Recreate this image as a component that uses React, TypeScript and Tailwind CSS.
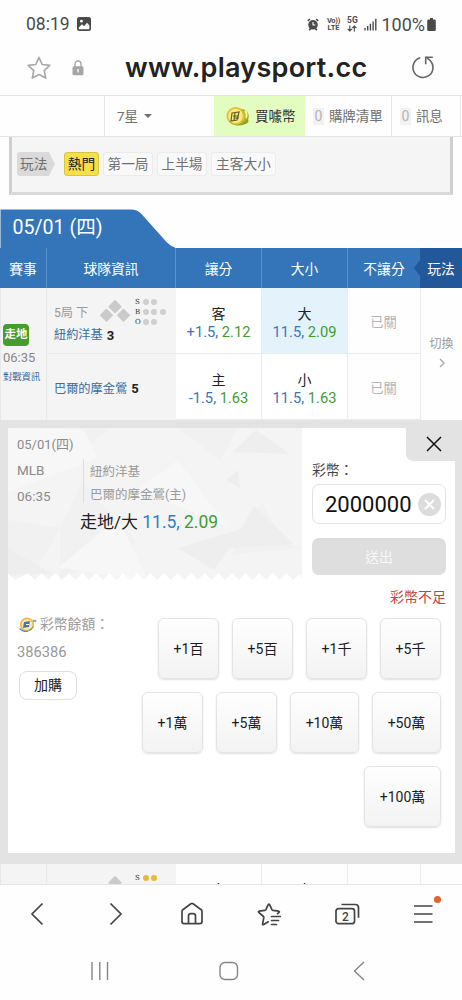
import React from "react"

const plays = [
  { label: "第一局", className: "w-[50px]" },
  { label: "上半場", className: "ml-1 w-[50px]" },
  { label: "主客大小", className: "ml-1 w-[65px]" },
]

const amounts = [
  [
    { label: "+1百", width: "w-[61px]" },
    { label: "+5百", width: "w-[61px]" },
    { label: "+1千", width: "w-[61px]" },
    { label: "+5千", width: "w-[61px]" },
  ],
  [
    { label: "+1萬", width: "w-[61px]" },
    { label: "+5萬", width: "w-[61px]" },
    { label: "+10萬", width: "w-[69px]" },
    { label: "+50萬", width: "w-[69px]" },
  ],
  [{ label: "+100萬", width: "w-[77px]" }],
]

const StatusBar = () => (
  <div className="flex h-12 shrink-0 items-center pl-[26px] pr-[26px] text-[#4a4a4a]">
    <span className="text-[17.5px]">08:19</span>
    <svg className="ml-[7px] h-[14px] w-[14px]" viewBox="0 0 14 14">
      <rect x="0" y="0" width="14" height="14" rx="2.5" fill="#4a4a4a" />
      <path d="M1.8 10.5 5 7.3l2 1.9 3-3.4 2.4 2.7v3a.8.8 0 0 1-.8.8H2.6a.8.8 0 0 1-.8-.8z" fill="#fff" />
      <circle cx="4.4" cy="4.2" r="1.4" fill="#fff" />
    </svg>
    <div className="ml-auto flex items-center">
      <svg className="h-[13px] w-[12px]" viewBox="0 0 12 13">
        <path d="M.8 2.8 2.9 1M11.2 2.8 9.1 1M2.2 12.2l1.4-1.6M9.8 12.2l-1.4-1.6" stroke="#4a4a4a" strokeWidth="1.6" />
        <circle cx="6" cy="6.8" r="4.8" fill="#4a4a4a" />
        <path d="M6 4v3h2.4" fill="none" stroke="#fff" strokeWidth="1.1" />
      </svg>
      <div className="ml-[7px] w-[14px] text-center text-[7.5px] font-bold leading-[7px]">
        <div className="tracking-[-0.3px]">Vo))</div>
        <div>LTE</div>
      </div>
      <div className="ml-[6px] flex w-[12px] flex-col items-center text-[8.5px] font-bold leading-[7px]">
        <div>5G</div>
        <svg className="mt-px h-[7px] w-[10px]" viewBox="0 0 10 7">
          <path d="M2.8.5v5.3M.7 3.8l2.1 2.2 2.1-2.2M7.3 6.5V1.2M5.2 3.2l2.1-2.2 2.1 2.2" fill="none" stroke="#4a4a4a" strokeWidth="1.1" />
        </svg>
      </div>
      <svg className="ml-[6px] h-[13px] w-[13px]" viewBox="0 0 13 13">
        <path d="M1 10v2.5M3.7 8v4.5M6.4 5.8v6.7M9.1 3.4v9.1M11.8.8v11.7" stroke="#4a4a4a" strokeWidth="1.4" />
      </svg>
      <span className="ml-[4px] text-[18px]">100%</span>
      <svg className="ml-[2px] h-[13px] w-[9px]" viewBox="0 0 9 13">
        <path d="M3 0h3v1.4h1.4A1.4 1.4 0 0 1 8.8 2.8v8.7A1.4 1.4 0 0 1 7.4 13H1.6A1.4 1.4 0 0 1 .2 11.5V2.8A1.4 1.4 0 0 1 1.6 1.4H3z" fill="#4a4a4a" />
      </svg>
    </div>
  </div>
)

const AddressBar = () => (
  <div className="flex h-[47px] shrink-0 items-center pl-[26px] pr-[27px]">
    <svg className="mt-[-8px] h-6 w-[26px]" viewBox="0 0 26 24">
      <path
        d="m13 1.5 3.2 7 7.6.9-5.6 5.2 1.5 7.5L13 18.4l-6.7 3.7 1.5-7.5L2.2 9.4l7.6-.9z"
        fill="none"
        stroke="#a9a9a9"
        strokeWidth="1.7"
        strokeLinejoin="round"
      />
    </svg>
    <svg className="mt-[-8px] ml-5 h-4 w-3" viewBox="0 0 12 16">
      <path d="M3 7V4a3 3 0 0 1 6 0v3" fill="none" stroke="#a6a6a6" strokeWidth="1.3" />
      <rect x=".5" y="6.3" width="11" height="9" rx="1.5" fill="#a6a6a6" />
      <path d="M6 9v3.6" stroke="#fff" strokeWidth="1.3" />
    </svg>
    <div className="mt-[-6px] ml-[41px] w-[244px] whitespace-nowrap font-['Inter','Noto_Sans',sans-serif] text-[27px] font-semibold tracking-[0.25px] text-[#222]">
      www.playsport.cc
    </div>
    <svg className="mt-[-9px] ml-auto h-[24px] w-[24px]" viewBox="0 0 24 24">
      <path d="M9.3 2.8A10 10 0 1 0 19.6 6L15.2 2.2" fill="none" stroke="#666" strokeWidth="1.6" />
      <path d="M14.7 9.3V2.2h7.1" fill="none" stroke="#666" strokeWidth="1.6" />
    </svg>
  </div>
)

const Coin = ({ className }: { className: string }) => (
  <svg className={className} viewBox="0 0 26 20">
    <ellipse cx="15.5" cy="11" rx="9.5" ry="8" fill="#a9b82c" transform="rotate(-15 15 11)" />
    <circle cx="11.5" cy="10" r="9" fill="#e3bd2d" />
    <circle cx="11.5" cy="10" r="7.3" fill="#fae982" />
    <path d="M4 14C9 21 19 20 24 12l.5 4C20 20 9 22 4 14z" fill="#8aa325" />
    <path d="m8 7 7-1-2 8-6 1zM9 10h6M10 12h5M11 7l-1 7" fill="none" stroke="#61621a" strokeWidth="1.2" />
    <path d="M21 5c2 2 2 4 1 7" fill="none" stroke="#fff7a8" strokeWidth="1.8" />
  </svg>
)

const SiteTabs = () => (
  <div className="flex h-[42px] shrink-0 border-y border-[#e4e4e4] text-[13.5px] text-[#707070]">
    <div className="w-[105px] border-r border-[#e8e8e8]" />
    <div className="flex w-[109px] items-center pl-[12px]">
      7星
      <span className="ml-[6px] border-x-[4px] border-t-[4px] border-x-transparent border-t-[#707070]" />
    </div>
    <div className="flex w-[91px] items-center bg-[#e3fcc0] pl-[10px] text-[#333]">
      <Coin className="h-5 w-[26px]" />
      <span className="ml-[5px]">買噱幣</span>
    </div>
    <div className="flex w-[87px] items-center border-r border-[#e8e8e8] pl-[8px]">
      <span className="mr-[5px] bg-[#f2f2f3] px-[1.5px] text-[14px] leading-[17px] text-[#b5b5b5]">0</span>
      購牌清單
    </div>
    <div className="flex w-[69px] items-center border-r border-[#e8e8e8] pl-[8px]">
      <span className="mr-[5px] bg-[#f2f2f3] px-[1.5px] text-[14px] leading-[17px] text-[#b5b5b5]">0</span>
      訊息
    </div>
  </div>
)

const PlayFilter = () => (
  <div className="mx-[9px] h-[58px] shrink-0 border-x-[3px] border-b-[3px] border-x-[#cfcfcf] border-b-[#dadada] bg-[#f5f5f5] pt-[15px]">
    <div className="flex h-[24px] pl-[5px] text-[13.7px] text-[#707070]">
      <div className="flex w-[38px] items-center rounded-l-[3px] bg-[#dadada] pl-[3px] [clip-path:polygon(0_0,84%_0,100%_50%,84%_100%,0_100%)]">
        玩法
      </div>
      <div className="mx-[9px] mr-1 flex w-[35px] items-center justify-center rounded-[3px] border border-[#d9c545] bg-[#f7df48] text-[#222]">
        熱門
      </div>
      {plays.map((x) => (
        <div
          key={x.label}
          className={`flex items-center justify-center rounded-[3px] border border-[#ececec] bg-[#f9f9f9] ${x.className}`}
        >
          {x.label}
        </div>
      ))}
    </div>
  </div>
)

const Count = ({ rows }: { rows: { label: string; dots: number; color: string }[] }) => (
  <div className="flex flex-col">
    {rows.map((x) => (
      <div key={x.label} className="flex h-[10px] items-center">
        <span className="w-[6px] font-['DejaVu_Serif',serif] text-[7px] text-[#333]">{x.label}</span>
        {Array.from({ length: x.dots }).map((_, i) => (
          <span key={i} className={`ml-[2.2px] h-[6px] w-[6px] rounded-full ${x.color}`} />
        ))}
      </div>
    ))}
  </div>
)

const Bases = () => (
  <svg className="h-[24px] w-[30px] shrink-0" viewBox="0 0 30 24">
    <g fill="#cacaca" stroke="#cacaca" strokeWidth="1.6" strokeLinejoin="round">
      <path d="m15 .9 5.8 5.8-5.8 5.8-5.800-5.800z" />
      <path d="m6.500 9.600 5.700 5.700-5.700 5.700L.8 15.300z" />
      <path d="m23.500 9.600 5.700 5.700-5.700 5.700-5.700-5.700z" />
    </g>
  </svg>
)

type OddsProps = {
  name: string
  line: string
  odds: string
  active?: boolean
}

const Odds = ({ name, line, odds, active }: OddsProps) => (
  <div
    className={`flex h-[66px] flex-col items-center justify-center border-b border-r border-[#ebebeb] pt-[4px] ${
      active ? "bg-[#e4f2fc]" : "bg-white"
    }`}
  >
    <div className="text-[14px] leading-[18px] text-[#222]">{name}</div>
    <div className="whitespace-nowrap text-[14.7px] leading-[18px] text-[#3f9c30]">
      <span className="text-[#3b76b8]">{line},</span> {odds}
    </div>
  </div>
)

const Closed = () => (
  <div className="flex h-[66px] items-center justify-center border-b border-r border-[#ebebeb] pt-[4px] pr-px text-[13.3px] text-[#b5b5b5]">
    已關
  </div>
)

const Matches = () => (
  <div className="shrink-0">
    <svg className="mt-[14px] block h-[39px] w-[180px]" viewBox="0 0 180 39">
      <path d="M.5 39V.5H131q6 0 10 4l26 29q4 4 8 5v.5z" fill="#3474b9" />
      <text x="12.5" y="25" fill="#fff" fontSize="19.6">
        05/01 (四)
      </text>
    </svg>
    <div className="flex h-10 bg-[#3474b9] text-center text-[13.8px] leading-[42px] text-white">
      <div className="w-[47px] border-r border-[#5c91c9]">賽事</div>
      <div className="w-[129px] border-r border-[#5c91c9]">球隊資訊</div>
      <div className="w-[86px] border-r border-[#5c91c9]">讓分</div>
      <div className="w-[86px] border-r border-[#5c91c9]">大小</div>
      <div className="w-[66px] pl-[6px]">不讓分</div>
      <div className="w-[48px] bg-[#22579a] pl-[6px] [clip-path:polygon(0_50%,6px_30%,6px_0,100%_0,100%_100%,6px_100%,6px_70%)]">
        玩法
      </div>
    </div>
    <div className="flex h-[132px]">
      <div className="flex w-[47px] flex-col items-start border-x border-[#e8e8e8] bg-[#f4f4f4] pl-[2px] pt-[36px]">
        <div className="flex h-[22px] w-[26px] items-center justify-center rounded-[4px] bg-[#449d2c] text-[11.5px] font-bold text-white">
          走地
        </div>
        <div className="mt-[4px] text-[13px] leading-[16px] text-[#888]">06:35</div>
        <div className="mt-[4px] whitespace-nowrap text-[9.3px] leading-[14px] text-[#376d9e]">對戰資訊</div>
      </div>
      <div className="w-[129px] bg-[#f4f4f4]">
        <div className="h-[66px] border-b border-[#e9e9e9] pl-[7px] pt-[9px]">
          <div className="flex h-[30px]">
            <span className="w-[46px] pt-[7px] text-[12.2px] text-[#999]">5局 下</span>
            <div className="pt-[3px]">
              <Bases />
            </div>
            <div className="ml-[5px]">
              <Count
                rows={[
                  { label: "S", dots: 2, color: "bg-[#cfcfcf]" },
                  { label: "B", dots: 3, color: "bg-[#cfcfcf]" },
                  { label: "O", dots: 2, color: "bg-[#cfcfcf]" },
                ]}
              />
            </div>
          </div>
          <div className="flex items-center text-[12.2px] leading-[17px] text-[#376d9e]">
            紐約洋基<b className="ml-[4px] text-[13px] text-[#222]">3</b>
          </div>
        </div>
        <div className="flex h-[66px] items-center pl-[7px] pt-[4px] text-[12.2px] text-[#376d9e]">
          巴爾的摩金鶯<b className="ml-[4px] text-[13px] text-[#222]">5</b>
        </div>
      </div>
      <div className="w-[86px]">
        <Odds name="客" line="+1.5" odds="2.12" />
        <Odds name="主" line="-1.5" odds="1.63" />
      </div>
      <div className="w-[86px]">
        <Odds name="大" line="11.5" odds="2.09" active />
        <Odds name="小" line="11.5" odds="1.63" />
      </div>
      <div className="w-[73px]">
        <Closed />
        <Closed />
      </div>
      <div className="flex w-[41px] flex-col items-center pt-[47px] text-[12px] leading-[18px] text-[#999]">
        切換
        <svg className="mt-[5px] h-[10px] w-[6px]" viewBox="0 0 6 10">
          <path d="m1 1 4 4-4 4" fill="none" stroke="#a5a5a5" strokeWidth="1.2" />
        </svg>
      </div>
    </div>
  </div>
)

const Ticket = () => (
  <div className="relative h-[152px] w-[294px]">
    <svg className="absolute inset-0 h-full w-full" viewBox="0 0 294 152">
      <defs>
        <clipPath id="ticket">
          <path d="M0 0H294V150l-2-4-6.800 6-6.800-7-6.800 7-6.800-7-6.800 7-6.800-7-6.800 7-6.800-7-6.800 7-6.800-7-6.800 7-6.800-7-6.800 7-6.800-7-6.800 7-6.800-7-6.800 7-6.800-7-6.800 7-6.800-7-6.800 7-6.800-7-6.800 7-6.800-7-6.800 7-6.800-7-6.800 7-6.800-7-6.800 7-6.800-7-6.800 7-6.800-7-6.800 7-6.800-7-6.800 7-6.800-7-6.800 7-6.800-7-6.800 7-6.800-7L7 152 0 145z" />
        </clipPath>
      </defs>
      <g clipPath="url(#ticket)">
        <path fill="#f4f4f4" d="M0 0h294v152H0z" />
        <path fill="#f1f1f1" d="M0 92l52 8-28 48H0zM52 100l22-46 55 60-77 38zM72 0h30L80 18zM170 0h60l-18 32zM294 120l-70 6 30-52 20 40z" />
        <path fill="#eeeeee" d="M225 24 248 2l34 24zM222 120l24-42 40 38zM218 52l12-10 2 18zM170 120l66-20-30 42zM0 120l44 26H0z" />
        <path fill="#f7f7f7" d="M76 2 90 30 0 64V0zM130 60l40-28 50 68zM50 140l60-50 30 62z" />
      </g>
    </svg>
    <div className="relative pl-[9px] pt-[8px] text-[13px] text-[#8b8b8b]">
      <div className="leading-[18px]">05/01(四)</div>
      <div className="mt-[3px] flex">
        <div className="w-[66px] text-[13.5px]">
          <div className="leading-[26px]">MLB</div>
          <div className="leading-[26px]">06:35</div>
        </div>
        <div className="mt-[2px] h-[44px] border-l border-[#dedede] pl-[6px] text-[12.5px] text-[#9b9b9b]">
          <div className="mt-px leading-[23px]">紐約洋基</div>
          <div className="leading-[23px]">巴爾的摩金鶯(主)</div>
        </div>
      </div>
      <div className="mt-px whitespace-nowrap pl-[63px] text-[17px] leading-[24px] text-[#222]">
        走地/大{" "}
        <span className="text-[17.5px] text-[#2f7dcb]">11.5,</span>{" "}
        <span className="text-[17.5px] text-[#3f9c30]">2.09</span>
      </div>
    </div>
  </div>
)

const BetSlip = () => (
  <div className="h-[444px] shrink-0 border-b-[11px] border-l-[8px] border-r-[7px] border-t-[8px] border-[#e3e3e3] bg-white">
    <div className="flex h-[182px]">
      <Ticket />
      <div className="w-[153px]">
        <div className="ml-auto flex h-[33px] w-[49px] items-center justify-center rounded-bl-[7px] bg-[#e3e3e3] pb-[2px] pl-[6px]">
          <svg className="h-4 w-4" viewBox="0 0 16 16">
            <path d="m1 1 14 14M15 1 1 15" stroke="#111" strokeWidth="1.5" />
          </svg>
        </div>
        <div className="pl-[10px] pr-[9px]">
          <div className="text-[13.8px] leading-[18px] text-[#444]">彩幣：</div>
          <div className="mt-[5px] flex h-10 items-center rounded-[7px] border border-[#e2e2e2] pl-[12px] text-[22px] text-[#111]">
            2000000
            <span className="ml-[6px] flex h-[23px] w-[23px] items-center justify-center rounded-full bg-[#dcdcdc]">
              <svg className="h-[11px] w-[11px]" viewBox="0 0 11 11">
                <path d="m1 1 9 9M10 1l-9 9" stroke="#fff" strokeWidth="2" />
              </svg>
            </span>
          </div>
          <div className="mt-[14px] flex h-[37px] items-center justify-center rounded-[7px] bg-[#dedede] pt-[2px] text-[13.7px] text-[#f8f8f8]">
            送出
          </div>
          <div className="mt-[12px] text-right text-[14px] leading-[20px] text-[#c9433a]">彩幣不足</div>
        </div>
      </div>
    </div>
    <div className="flex justify-between pr-[14px] pt-[8px]">
      <div className="pl-[9px] text-[13.8px] text-[#999]">
        <div className="mt-[-4px] flex h-[20px] items-center">
          <svg className="mr-[3px] ml-[2px] h-[15px] w-[18px]" viewBox="0 0 18 15">
            <circle cx="8" cy="7.5" r="7" fill="#f0b94d" />
            <circle cx="8" cy="7.5" r="5.3" fill="#ffedac" />
            <path d="M.5 11.5q7 7 14-2" fill="none" stroke="#4b91c9" strokeWidth="1.2" />
            <path d="m5 5 6-1-1 6-6 1z" fill="#4b72ac" />
            <path d="M7 7.5h3" stroke="#fff" />
            <path d="M14 4q2-.8 3 .6" fill="none" stroke="#6ca6dc" strokeWidth="2" />
          </svg>
          彩幣餘額：
        </div>
        <div className="mt-[8px] text-[14.7px] leading-[20px]">386386</div>
        <button className="mt-[9px] ml-[2px] flex h-[29px] w-[58px] items-center justify-center rounded-[8px] border border-[#dfdfdf] text-[14px] text-[#222]">
          加購
        </button>
      </div>
      <div className="flex flex-col gap-[13px]">
        {amounts.map((row, index) => (
          <div key={index} className="flex justify-end gap-[13px]">
            {row.map((x) => (
              <button
                key={x.label}
                className={`flex h-[61px] items-center justify-center rounded-[6px] border border-[#e4e4e4] bg-linear-to-b from-[#fefefe] to-[#f3f3f3] pt-[2px] text-[14px] text-[#1c1c1c] shadow-[0_1px_2px_rgba(0,0,0,0.13)] ${x.width}`}
              >
                {x.label}
              </button>
            ))}
          </div>
        ))}
      </div>
    </div>
  </div>
)

// following match, cut off by the browser toolbar
const NextMatch = () => (
  <div className="flex h-[21px] shrink-0 overflow-hidden border-b border-[#e6e6e6]">
    <div className="w-[47px] border-x border-[#e8e8e8] bg-[#f4f4f4]" />
    <div className="flex w-[129px] bg-[#f4f4f4] pl-[7px] pt-[9px]">
      <span className="w-[46px] pt-[8px] text-[12.2px] leading-[18px] text-[#999]">5局 下</span>
      <div className="pt-[3px]">
        <Bases />
      </div>
      <div className="ml-[5px]">
        <Count rows={[{ label: "S", dots: 2, color: "bg-[#e8b73d]" }]} />
      </div>
    </div>
    <div className="w-[86px] border-r border-[#ebebeb] pt-[17px] text-center text-[14px] leading-[18px]">客</div>
    <div className="w-[86px] border-r border-[#ebebeb] pt-[17px] text-center text-[14px] leading-[18px]">大</div>
    <div className="w-[73px] border-r border-[#ebebeb]" />
  </div>
)

const BrowserNav = () => (
  <div className="flex h-[57px] shrink-0 items-center justify-between pl-[30px] pr-[20px]">
    <svg className="h-[24px] w-[14px]" viewBox="0 0 14 24">
      <path d="M12.5 1.5 2 12l10.5 10.5" fill="none" stroke="#444" strokeWidth="1.7" />
    </svg>
    <svg className="ml-[12px] h-[24px] w-[14px]" viewBox="0 0 14 24">
      <path d="M1.5 1.5 12 12 1.5 22.5" fill="none" stroke="#444" strokeWidth="1.7" />
    </svg>
    <svg className="ml-[3px] h-[24px] w-[24px]" viewBox="0 0 24 24" fill="none" stroke="#444" strokeWidth="1.7">
      <path d="M2 9.3q0-1 .8-1.6l8.100-6q1.100-.8 2.200 0l8.100 6q.8.600.8 1.600v10.200q0 2.200-2.200 2.200H4.200Q2 21.700 2 19.500z" />
      <path d="M8.500 21.500V14q0-2.300 2.300-2.300h2.400q2.300 0 2.300 2.300v7.500" />
    </svg>
    <svg className="h-[24px] w-[24px]" viewBox="0 0 24 24" fill="none" stroke="#444" strokeWidth="1.7" strokeLinecap="round" strokeLinejoin="round">
      <path d="m5.500 22.300 1.300-6.800q.1-.6-.4-1L1.700 10.300q-.7-.8.3-1.100l5.900-.8q.7-.1 1-.7l2.300-5q.7-1.300 1.400 0l2.300 5q.3.600 1 .7l5.900.8q1 .3.300 1.100l-1.600 1.400M5.500 22.300q.5.500 1.300.1l4.400-2.600" />
      <path d="M14.500 14.500h9M14.500 18.500h7M14.500 22.500h5" />
    </svg>
    <svg className="h-[24px] w-[26px]" viewBox="0 0 26 24" fill="none" stroke="#444" strokeWidth="1.7">
      <rect x="1" y="6.700" width="18.500" height="15" rx="2.500" />
      <path d="M6.500 2.500h13.800q3.200 0 3.200 3.200v10" />
      <text x="10.300" y="18.500" fill="#444" stroke="none" fontSize="12" fontWeight="500" textAnchor="middle">
        2
      </text>
    </svg>
    <svg className="h-[38px] w-[28px]" viewBox="0 0 28 38">
      <path d="M0 11h18.500M0 19h18.500M0 27h18.500" stroke="#444" strokeWidth="1.600" />
      <circle cx="23.500" cy="4.500" r="3.600" fill="#dd6533" />
    </svg>
  </div>
)

const SystemNav = () => (
  <div className="flex h-[58px] shrink-0 items-center pl-[90px]">
    <svg className="h-[18px] w-[20px]" viewBox="0 0 20 18">
      <path d="M2 0v18M9.800 0v18M17.500 0v18" stroke="#858585" strokeWidth="1.400" />
    </svg>
    <svg className="ml-[109px] h-5 w-5" viewBox="0 0 20 20">
      <rect x="1" y="1.500" width="17.500" height="17" rx="5" fill="none" stroke="#858585" strokeWidth="1.400" />
    </svg>
    <svg className="ml-[114px] h-5 w-[12px]" viewBox="0 0 12 20">
      <path d="m11 1-9.500 9 9.500 9" fill="none" stroke="#858585" strokeWidth="1.400" />
    </svg>
  </div>
)

const App: React.FC = () => {
  return (
    <div className="flex h-[1000px] w-[462px] flex-col overflow-hidden bg-[#fefefe] font-['Roboto','Noto_Sans_CJK_TC',sans-serif]">
      <StatusBar />
      <AddressBar />
      <SiteTabs />
      <PlayFilter />
      <Matches />
      <BetSlip />
      <NextMatch />
      <BrowserNav />
      <SystemNav />
    </div>
  )
}

export default App
